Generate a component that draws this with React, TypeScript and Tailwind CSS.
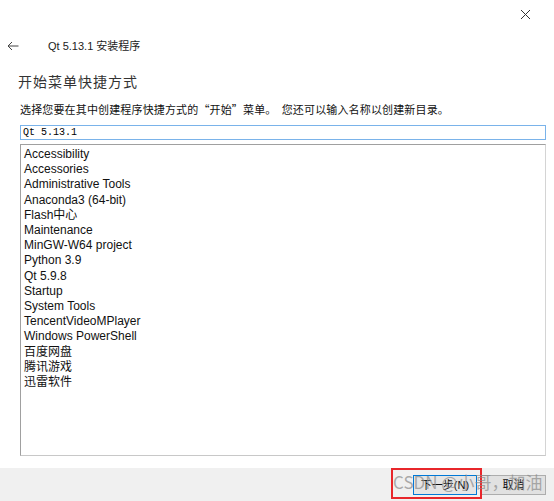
import React from "react";

const folders = [
  "Accessibility",
  "Accessories",
  "Administrative Tools",
  "Anaconda3 (64-bit)",
  "Flash中心",
  "Maintenance",
  "MinGW-W64 project",
  "Python 3.9",
  "Qt 5.9.8",
  "Startup",
  "System Tools",
  "TencentVideoMPlayer",
  "Windows PowerShell",
  "百度网盘",
  "腾讯游戏",
  "迅雷软件",
];

function CloseIcon() {
  return (
    <svg width="11" height="11" viewBox="0 0 11 11" className="text-[#333]">
      <path d="M1 1L10 10M10 1L1 10" stroke="currentColor" strokeWidth="1" fill="none" />
    </svg>
  );
}

function BackIcon() {
  return (
    <svg width="12" height="10" viewBox="0 0 12 10" className="text-[#444]">
      <path d="M11.5 5H1M5 1L1 5L5 9" stroke="currentColor" strokeWidth="1" fill="none" />
    </svg>
  );
}

export default function App() {
  return (
    <div className="relative w-[554px] h-[501px] bg-white flex flex-col font-['Liberation_Sans','Noto_Sans_CJK_SC',sans-serif] text-[#1a1a1a] overflow-hidden">
      <div className="h-[38px] flex justify-end items-start pt-[9px] pr-[23px]">
        <CloseIcon />
      </div>

      <div className="h-[16px] flex items-center pl-[7px]">
        <BackIcon />
        <span className="ml-[29px] text-[11px] leading-[16px] text-[#222]">Qt 5.13.1 安装程序</span>
      </div>

      <h1 className="mt-[17px] h-[20px] pl-[18px] text-[14px] leading-[20px] font-normal text-[#333] font-['Noto_Sans_CJK_SC',sans-serif] tracking-[1px]">
        开始菜单快捷方式
      </h1>

      <p className="mt-[10px] h-[16px] pl-[20px] text-[11px] leading-[16px] text-[#111] font-['Noto_Sans_CJK_SC',sans-serif] tracking-[0.15px]">
        选择您要在其中创建程序快捷方式的“开始”菜单。&nbsp; 您还可以输入名称以创建新目录。
      </p>

      <div className="mt-[8px] mx-[20px] w-[526px] h-[15px] border border-[#7ab3ea] flex items-center px-[2px]">
        <span className="font-['Liberation_Mono',monospace] text-[10px] leading-[13px] text-black">Qt 5.13.1</span>
      </div>

      <div className="mt-[4px] mx-[20px] w-[526px] h-[312px] border border-[#a0a0a0] border-r-[#d4d4d4] border-b-[#c8c8c8] pt-[2px] pl-[3px]">
        {folders.map((name) => (
          <div key={name} className="text-[12px] leading-[15.2px] text-[#111]">
            {name}
          </div>
        ))}
      </div>

      <div className="mt-[12px] h-[33px] bg-[#f0f0f0] flex justify-end items-center gap-[4px] pr-[8px]">
        <button className="w-[64px] h-[20px] border border-[#0078d7] bg-[#e5e5e5] text-[11px] leading-[18px] text-[#111]">
          下一步(N)
        </button>
        <button className="w-[65px] h-[20px] border border-[#adadad] bg-[#e1e1e1] text-[11px] leading-[18px] text-[#111]">
          取消
        </button>
      </div>

      <div className="absolute left-[391px] top-[468px] w-[91px] h-[31px] border-2 border-[#e8262b] pointer-events-none" />
      <div className="absolute left-[393px] top-[471px] text-[17px] leading-[22px] text-[#8a8a8a]/70 font-['Noto_Sans_CJK_SC',sans-serif] pointer-events-none whitespace-nowrap">
        CSDN @小哥，加油
      </div>
    </div>
  );
}
